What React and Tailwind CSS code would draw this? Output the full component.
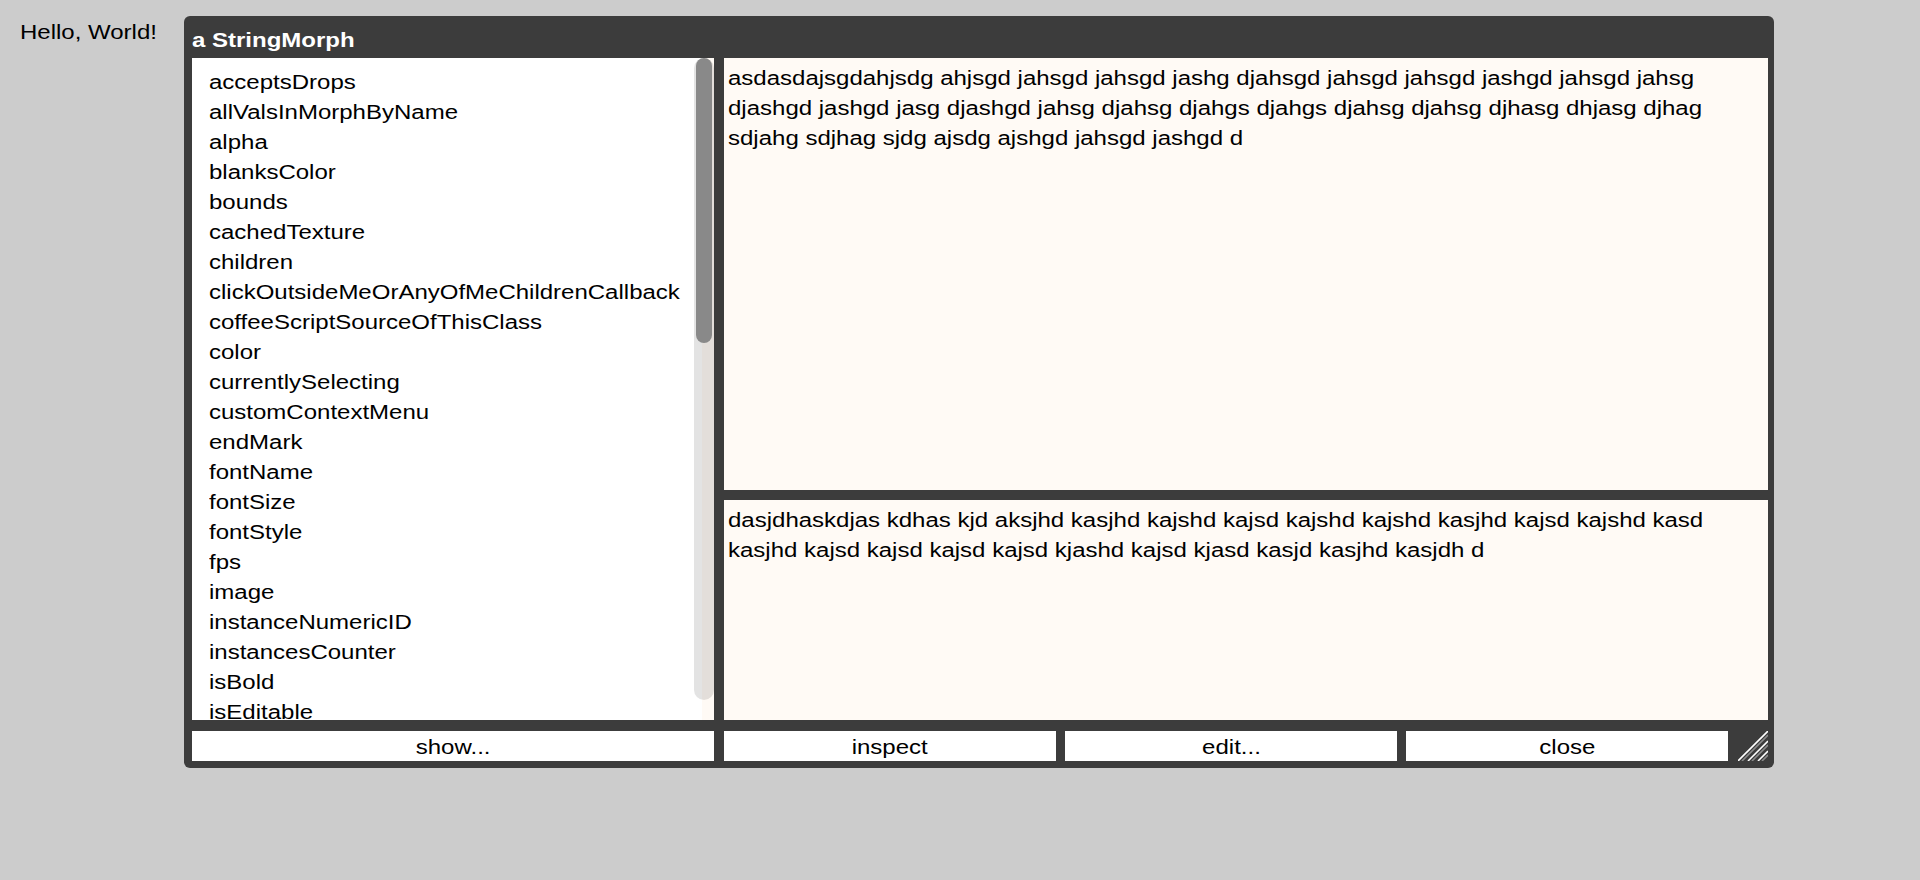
import React from "react";

const items = [
  "acceptsDrops",
  "allValsInMorphByName",
  "alpha",
  "blanksColor",
  "bounds",
  "cachedTexture",
  "children",
  "clickOutsideMeOrAnyOfMeChildrenCallback",
  "coffeeScriptSourceOfThisClass",
  "color",
  "currentlySelecting",
  "customContextMenu",
  "endMark",
  "fontName",
  "fontSize",
  "fontStyle",
  "fps",
  "image",
  "instanceNumericID",
  "instancesCounter",
  "isBold",
  "isEditable",
];

const topLines = [
  "asdasdajsgdahjsdg ahjsgd jahsgd jahsgd jashg djahsgd jahsgd jahsgd jashgd jahsgd jahsg",
  "djashgd jashgd jasg djashgd jahsg djahsg djahgs djahgs djahsg djahsg djhasg dhjasg djhag",
  "sdjahg sdjhag sjdg ajsdg ajshgd jahsgd jashgd d",
];

const bottomLines = [
  "dasjdhaskdjas kdhas kjd aksjhd kasjhd kajshd kajsd kajshd kajshd kasjhd kajsd kajshd kasd",
  "kasjhd kajsd kajsd kajsd kajsd kjashd kajsd kjasd kasjd kasjhd kasjdh d",
];

function Line({ children, h = "h-[30px]" }) {
  return (
    <div className={`${h} whitespace-nowrap`}>
      <span className="inline-block scale-x-[1.2] origin-left">{children}</span>
    </div>
  );
}

function Btn({ w, label }) {
  return (
    <div className={`${w} h-[30px] bg-white flex justify-center items-center leading-[30px]`}>
      <span className="inline-block scale-x-[1.2] translate-y-[1px]">{label}</span>
    </div>
  );
}

export default function App() {
  return (
    <div className="w-full h-[880px] bg-[#cccccc] flex items-start pt-[16px] font-['Liberation_Sans',Arial,sans-serif] text-[20px] leading-[30px] text-black">
      <div className="w-[184px] shrink-0 pl-[20px] pt-[1px]">
        <span className="inline-block scale-x-[1.2] origin-left whitespace-nowrap">
          Hello, World!
        </span>
      </div>
      <div className="w-[1590px] shrink-0 bg-[#3c3c3c] rounded-[6px] pl-[8px] pr-[6px] pb-[7px] flex flex-col">
        <div className="h-[42px] pt-[9px] font-bold text-white whitespace-nowrap">
          <span className="inline-block scale-x-[1.2] origin-left">a StringMorph</span>
        </div>
        <div className="flex gap-[10px] h-[662px]">
          <div className="relative w-[522px] flex">
            <div className="w-[510px] bg-white pl-[17px] pt-[9px]">
              {items.map((t, i) => (
                <Line key={t} h={i === items.length - 1 ? "h-[23px]" : "h-[30px]"}>
                  {t}
                </Line>
              ))}
            </div>
            <div className="w-[12px] bg-[#fffaf5]" />
            <div className="absolute left-[502px] top-0 w-[20px] h-[642px] rounded-[10px] bg-black/[0.11]" />
            <div className="absolute left-[504px] top-0 w-[16px] h-[285px] rounded-[8px] bg-[#898989]" />
          </div>
          <div className="flex-1 flex flex-col gap-[10px]">
            <div className="h-[432px] bg-[#fffaf5] pl-[4px] pt-[5px]">
              {topLines.map((t, i) => (
                <Line key={i}>{t}</Line>
              ))}
            </div>
            <div className="flex-1 bg-[#fffaf5] pl-[4px] pt-[5px]">
              {bottomLines.map((t, i) => (
                <Line key={i}>{t}</Line>
              ))}
            </div>
          </div>
        </div>
        <div className="mt-[11px] flex h-[30px]">
          <Btn w="w-[522px]" label="show..." />
          <div className="ml-[10px] flex gap-[9px]">
            <Btn w="w-[332px]" label="inspect" />
            <Btn w="w-[332px]" label="edit..." />
            <Btn w="w-[322px]" label="close" />
          </div>
          <div className="ml-[10px] w-[30px] h-[30px]">
            <svg width="30" height="30" viewBox="0 0 30 30">
              <line x1="0" y1="30" x2="30" y2="0" stroke="#ffffff" strokeWidth="1.6" />
              <line x1="4" y1="30" x2="30" y2="4" stroke="#8a8a8a" strokeWidth="1.6" />
              <line x1="10" y1="30" x2="30" y2="10" stroke="#ffffff" strokeWidth="1.6" />
              <line x1="14" y1="30" x2="30" y2="14" stroke="#8a8a8a" strokeWidth="1.6" />
              <line x1="20" y1="30" x2="30" y2="20" stroke="#ffffff" strokeWidth="1.6" />
              <line x1="24" y1="30" x2="30" y2="24" stroke="#8a8a8a" strokeWidth="1.6" />
            </svg>
          </div>
        </div>
      </div>
    </div>
  );
}
